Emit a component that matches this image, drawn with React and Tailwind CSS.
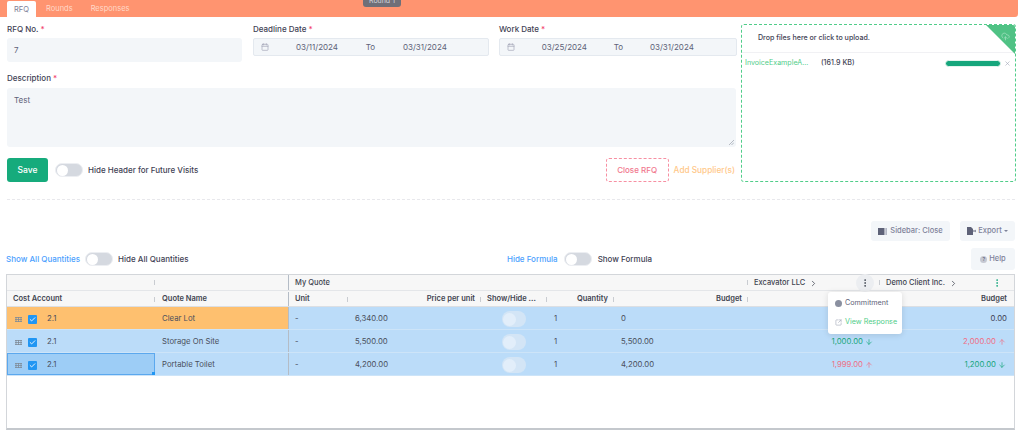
// App.jsx - RFQ detail page
import { ArrowDown, ArrowUp, Calendar, Check, ChevronRight, CloudUpload, EllipsisVertical, SquareArrowOutUpRight, X } from 'lucide-react';
import React from 'react';

const Required = () => <span className="text-[#f1416c]"> *</span>;

const Toggle = () => (
  <div className="w-[28px] h-[14px] rounded-full bg-[#d5d9e0] border border-[#eceef2] flex items-center pl-[1px] shrink-0">
    <div className="w-[11px] h-[11px] rounded-full bg-white" />
  </div>
);

const Label = ({ children }) => (
  <div className="font-medium h-[13px] leading-[13px] whitespace-nowrap">{children}<Required /></div>
);

const DateRange = ({ from, to, fromWidth, toWidth }) => (
  <div className="h-[18px] mt-[2px] flex items-center bg-[#f3f6f9] border border-[#e4e9ef] rounded-[2px] text-[#5e6278]">
    <Calendar className="w-[8px] h-[8px] ml-[7px] text-[#a1a5b7]" />
    <span className={`${fromWidth} text-right`}>{from}</span>
    <span className={`${toWidth} text-center`}>To</span>
    <span>{to}</span>
  </div>
);

const Sep = () => <span className="block w-px h-[5px] bg-[#c9ccd1] shrink-0" />;

const HeadCell = ({ width, children, right }) => (
  <div className={`${width} h-full flex items-center px-[6px] relative whitespace-nowrap ${right ? 'justify-end' : ''}`}>
    {children}
    <span className="absolute right-0 top-[5px] w-px h-[5px] bg-[#c9ccd1]" />
  </div>
);

const Grip = () => (
  <svg width="7" height="5" viewBox="0 0 7 5" className="text-[#7f8a97] shrink-0">
    <path d="M0 .5h7M0 2.5h7M0 4.5h7M1 0v5M3.5 0v5M6 0v5" stroke="currentColor" strokeWidth=".8" fill="none" />
  </svg>
);

const rows = [
  { name: 'Clear Lot', price: '6,340.00', budget: '0', excavator: null, demo: { value: '0.00', tone: 'plain' }, bg: 'bg-[#fec06f]' },
  { name: 'Storage On Site', price: '5,500.00', budget: '5,500.00', excavator: { value: '1,000.00', tone: 'down' }, demo: { value: '2,000.00', tone: 'up' }, bg: 'bg-[#bbdcf9]' },
  { name: 'Portable Toilet', price: '4,200.00', budget: '4,200.00', excavator: { value: '1,999.00', tone: 'up' }, demo: { value: '1,200.00', tone: 'down' }, bg: 'bg-[#bbdcf9]', selected: true }
];

const Amount = ({ item }) => {
  if (!item) return null;
  if (item.tone === 'plain') return <span className="text-[#3f4254]">{item.value}</span>;
  const up = item.tone === 'up';
  return (
    <span className={`flex items-center gap-[2px] pr-[1px] ${up ? 'text-[#ef6f86]' : 'text-[#16a67c]'}`}>
      {item.value}
      {up ? <ArrowUp className="w-[8px] h-[8px]" /> : <ArrowDown className="w-[8px] h-[8px]" />}
    </span>
  );
};

const QuoteRow = ({ row }) => (
  <div className="flex h-[23px] text-[7.75px] text-[#4a4f5c] border-b border-[#cde4f8]">
    <div className={`w-[282px] flex ${row.bg} border-r border-[#b4bcc6]`}>
      <div className={`w-[148px] flex items-center pt-[2px] pl-[8px] relative ${row.selected ? 'bg-[#9dcdf6] outline -outline-offset-1 outline-[#5ba8ee]' : ''}`}>
        <Grip />
        <div className="ml-[6px] w-[9px] h-[9px] rounded-[1px] bg-[#2196f3] flex items-center justify-center">
          <Check className="w-[7px] h-[7px] text-white" strokeWidth={3} />
        </div>
        <span className="ml-[10px]">2.1</span>
        {row.selected && <span className="absolute right-0 bottom-0 w-[3px] h-[3px] bg-[#2196f3]" />}
      </div>
      <div className="flex-1 flex items-center pt-[2px] pl-[7px]">{row.name}</div>
    </div>
    <div className="flex-1 flex items-center pt-[2px] bg-[#bbdcf9]">
      <div className="w-[59px] pl-[6px]">-</div>
      <div className="w-[133px] pl-[7px]">{row.price}</div>
      <div className="w-[66px] flex justify-center">
        <div className="w-[24px] h-[16px] rounded-full bg-[#d3e5f6] flex items-center pl-[1px]">
          <div className="w-[13px] h-[13px] rounded-full bg-[#e2eefa]" />
        </div>
      </div>
      <div className="w-[67px] pl-[7px]">1</div>
      <div className="w-[134px] pl-[7px]">{row.budget}</div>
      <div className="w-[126px] flex justify-end"><Amount item={row.excavator} /></div>
      <div className="flex-1 flex justify-end pr-[7px]"><Amount item={row.demo} /></div>
    </div>
  </div>
);

const QuoteGrid = () => (
  <div className="ml-[6px] w-[1009px] h-[156px] border border-[#d3d6da] border-b-2 border-b-[#c4c8cd] relative bg-white">
    <div className="flex h-[16px] bg-[#f7f7f7] border-b border-[#e4e6e9] text-[7.5px] font-medium text-[#3f4450]">
      <div className="w-[282px] flex items-center border-r border-[#b4bcc6]">
        <div className="w-[148px] flex justify-end"><Sep /></div>
      </div>
      <div className="flex-1 flex items-center">
        <span className="w-[458px] pl-[6px] pt-[1px]">My Quote</span>
        <Sep />
        <span className="ml-[6px] w-[102px] pt-[1px] flex items-center gap-[4px]">Excavator LLC <ChevronRight className="w-[9px] h-[9px]" /></span>
        <div className="w-[18px] h-[18px] rounded-full bg-[#eceef1] flex items-center justify-center">
          <EllipsisVertical className="w-[10px] h-[10px] text-[#3f4450]" />
        </div>
        <span className="ml-[5px] mr-[6px]"><Sep /></span>
        <span className="w-[106px] pt-[1px] flex items-center gap-[4px]">Demo Client Inc. <ChevronRight className="w-[9px] h-[9px]" /></span>
        <EllipsisVertical className="w-[10px] h-[10px] text-[#16a67c]" />
      </div>
    </div>
    <div className="flex h-[16px] pt-[1px] bg-[#f7f7f7] border-b border-[#dcdfe3] text-[7.5px] font-semibold text-[#3f4450]">
      <div className="w-[282px] flex border-r border-[#b4bcc6]">
        <HeadCell width="w-[148px]">Cost Account</HeadCell>
        <div className="flex-1 flex items-center pl-[7px]">Quote Name</div>
      </div>
      <HeadCell width="w-[59px]">Unit</HeadCell>
      <HeadCell width="w-[133px]" right>Price per unit</HeadCell>
      <HeadCell width="w-[66px]">Show/Hide ...</HeadCell>
      <HeadCell width="w-[67px]" right>Quantity</HeadCell>
      <HeadCell width="w-[134px]" right>Budget</HeadCell>
      <HeadCell width="w-[132px]" />
      <div className="flex-1 flex items-center justify-end pr-[7px]">Budget</div>
    </div>
    {rows.map((row) => <QuoteRow key={row.name} row={row} />)}

    {/* Kebab menu */}
    <div className="absolute left-[821px] top-[17px] w-[74px] h-[42px] bg-white rounded-[3px] shadow-[0_1px_6px_rgba(0,0,0,0.12)] text-[7.2px] whitespace-nowrap flex flex-col justify-center gap-[8px] pl-[7px]">
      <div className="flex items-center gap-[2px] text-[#5e6278]">
        <span className="w-[7px] h-[7px] rounded-full bg-[#8a90a0] mr-[1px]" />Commitment
      </div>
      <div className="flex items-center gap-[2px] text-[#50cd89]">
        <SquareArrowOutUpRight className="w-[7px] h-[7px] text-[#a1a5b7] mr-[1px]" />View Response
      </div>
    </div>
  </div>
);

const UploadBox = () => (
  <div className="w-[275px] h-[158px] mt-[1px] border border-dashed border-[#50cd89] rounded-[3px] relative overflow-hidden">
    <div className="h-[28px] flex items-center pl-[16px] border-b border-[#f1f1f4] text-[7.1px] font-medium text-[#3f4254]">
      Drop files here or click to upload.
    </div>
    <div className="h-[20px] flex items-center text-[7.1px] pl-[3px] pr-[4px] whitespace-nowrap">
      <span className="w-[76px] text-[#50cd89]">InvoiceExampleA...</span>
      <span className="font-medium text-[#3f4254]">(161.9 KB)</span>
      <div className="ml-auto w-[56px] h-[7px] rounded-full bg-[#16a67c] border border-[#e4f5ee]" />
      <X className="ml-[3px] w-[7px] h-[7px] text-[#a1a5b7]" />
    </div>
    <svg width="29" height="29" viewBox="0 0 29 29" className="absolute right-0 top-0">
      <path d="M0 0H29V29Z" fill="#50c285" />
    </svg>
    <CloudUpload className="absolute right-[5px] top-[7px] w-[9px] h-[9px] text-[#a5e0c2]" />
  </div>
);

export default function App() {
  return (
    <div className="w-[1024px] h-[439px] overflow-hidden bg-white font-['Inter',sans-serif] text-[8px] text-[#3f4254] relative">
      {/* Tabs */}
      <div className="w-[1018px] h-[17px] bg-[#ff9470] flex items-end pl-[7px] rounded-br-[3px] text-[7.5px] text-[#ffd9c9]">
        <div className="w-[29px] h-[16px] pt-[2px] bg-white rounded-t-[2px] flex items-center justify-center text-[#7e8299]">RFQ</div>
        <span className="ml-[10px] mb-[3px]">Rounds</span>
        <span className="ml-[18px] mb-[3px]">Responses</span>
      </div>
      <div className="absolute left-[363px] top-0 w-[38px] h-[7px] bg-[#6f6f78] rounded-b-[3px] text-[7px] leading-[2px] text-center text-[#d5d5da]">Round 1</div>

      {/* RFQ form */}
      <div className="flex pl-[7px] pt-[6px] h-[182px]">
        <div className="w-[729px]">
          <div className="grid grid-cols-[235px_236px_237px] gap-x-[11px] h-[49px]">
            <div>
              <Label>RFQ No.</Label>
              <div className="h-[24px] mt-[2px] bg-[#f3f6f9] rounded-[3px] flex items-center pl-[7px] text-[#5e6278]">7</div>
            </div>
            <div>
              <Label>Deadline Date</Label>
              <DateRange from="03/11/2024" to="03/31/2024" fromWidth="w-[69px]" toWidth="w-[65px]" />
            </div>
            <div className="-ml-[1px]">
              <Label>Work Date</Label>
              <DateRange from="03/25/2024" to="03/31/2024" fromWidth="w-[72px]" toWidth="w-[63px]" />
            </div>
          </div>
          <Label>Description</Label>
          <div className="h-[59px] mt-[3px] bg-[#f3f6f9] rounded-[3px] pl-[7px] pt-[6px] text-[#5e6278] relative">
            Test
            <svg width="5" height="5" viewBox="0 0 5 5" className="absolute right-[2px] bottom-[2px]">
              <path d="M0 5 5 0M2.5 5 5 2.5" stroke="#9aa0ac" strokeWidth=".7" />
            </svg>
          </div>
          <div className="flex items-center mt-[11px] h-[24px]">
            <button className="w-[41px] h-[24px] bg-[#16ab7c] rounded-[3px] text-white font-medium text-[8.5px]">Save</button>
            <span className="ml-[7px]"><Toggle /></span>
            <span className="ml-[5px] font-medium">Hide Header for Future Visits</span>
            <button className="ml-auto w-[63px] h-[24px] border border-dashed border-[#f78fa2] rounded-[3px] text-[#f1788e] font-medium">Close RFQ</button>
            <span className="ml-[5px] mr-[1px] text-[#ffc88a] font-medium text-[8.25px]">Add Supplier(s)</span>
          </div>
        </div>
        <div className="ml-[5px]"><UploadBox /></div>
      </div>

      <div className="mx-[7px] w-[1008px] border-t border-dashed border-[#e8e8ec]" />

      {/* Toolbar */}
      <div className="flex justify-end gap-[10px] mt-[21px] pr-[9px] text-[7.5px] font-medium text-[#7e8299]">
        <button className="w-[79px] h-[20px] bg-[#f3f6f9] rounded-[3px] flex items-center justify-center gap-[3px]">
          <svg width="9" height="7" viewBox="0 0 9 7"><path d="M0 0h6.5v7H0z" fill="#5e6278" /><path d="M7.3 0H9v7H7.3z" fill="#b5b9c6" /></svg>
          Sidebar: Close
        </button>
        <button className="w-[55px] h-[20px] bg-[#f3f6f9] rounded-[3px] flex items-center justify-center gap-[2px]">
          <svg width="9" height="8" viewBox="0 0 9 8"><path d="M0 0h4l2 2v6H0z" fill="#5e6278" /><path d="M6 3.5h2V2.6L9 4 8 5.4v-.9H6z" fill="#5e6278" /></svg>
          Export
          <span className="w-0 h-0 border-x-[2px] border-x-transparent border-t-[2px] border-t-[#7e8299]" />
        </button>
      </div>
      <div className="flex items-center mt-[7px] h-[22px] pl-[6px] pr-[9px]">
        <span className="text-[#4c9ffe] font-medium">Show All Quantities</span>
        <span className="ml-[5px]"><Toggle /></span>
        <span className="ml-[5px] font-medium">Hide All Quantities</span>
        <span className="ml-auto text-[#4c9ffe] font-medium">Hide Formula</span>
        <span className="ml-[6px]"><Toggle /></span>
        <span className="ml-[6px] font-medium">Show Formula</span>
        <button className="ml-[319px] w-[44px] h-[22px] bg-[#f3f6f9] rounded-[3px] flex items-center justify-center gap-[2px] text-[7.5px] font-medium text-[#7e8299]">
          <span className="w-[7px] h-[7px] rounded-full bg-[#c5c8d2] text-[5px] leading-[7px] text-center text-[#5e6278]">?</span>
          Help
        </button>
      </div>
      <div className="mt-[4px]"><QuoteGrid /></div>
    </div>
  );
}
